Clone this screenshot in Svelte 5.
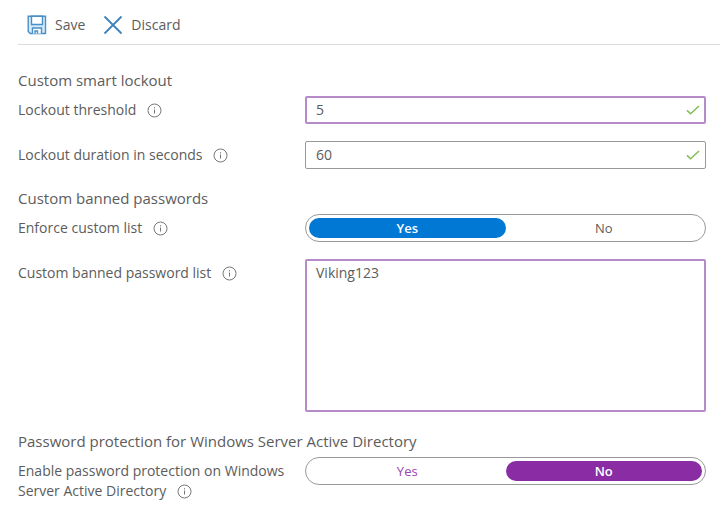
<script lang="ts">
	let threshold = '5';
	let duration = '60';
	let enforce = 'Yes';
	let banned = 'Viking123';
	let protection = 'No';

	const options = ['Yes', 'No'];
</script>

{#snippet info()}
	<svg class="info" viewBox="0 0 15 15" aria-hidden="true">
		<circle cx="7.5" cy="7.5" r="6.5" />
		<path d="M7.5 6.5v4M7.5 4.2v1.2" />
	</svg>
{/snippet}

{#snippet check()}
	<svg class="check" viewBox="0 0 14 10" aria-hidden="true">
		<path d="M1 5.4l3.6 3.4L13 1" />
	</svg>
{/snippet}

<nav class="toolbar">
	<button type="button">
		<svg class="command" viewBox="0 0 20 20" aria-hidden="true">
			<path class="fill" d="M1.2 1.2h17.3v17.3H3.2l-2-2z" />
			<path class="paper" d="M4.5 1.2h11v8.3h-11zM5.5 18.5v-5.5h9v5.5" />
			<path d="M8 18.5v-2.5h2.5v2.5" />
		</svg>
		Save
	</button>
	<button type="button">
		<svg class="command" viewBox="0 0 20 20" aria-hidden="true">
			<path class="cross" d="M1.5 1.5l17 17M18.5 1.5l-17 17" />
		</svg>
		Discard
	</button>
</nav>

<form>
	<section>
		<h2>Custom smart lockout</h2>
		<div class="row">
			<label for="threshold">Lockout threshold {@render info()}</label>
			<div class="field active">
				<input id="threshold" type="text" bind:value={threshold} />
				{@render check()}
			</div>
		</div>
		<div class="row">
			<label for="duration">Lockout duration in seconds {@render info()}</label>
			<div class="field">
				<input id="duration" type="text" bind:value={duration} />
				{@render check()}
			</div>
		</div>
	</section>

	<section>
		<h2>Custom banned passwords</h2>
		<div class="row">
			<span class="label" id="enforce">Enforce custom list {@render info()}</span>
			<div class="toggle" role="radiogroup" aria-labelledby="enforce">
				{#each options as option}
					<label>
						<input type="radio" name="enforce" value={option} bind:group={enforce} />
						<span>{option}</span>
					</label>
				{/each}
			</div>
		</div>
		<div class="row">
			<label for="banned">Custom banned password list {@render info()}</label>
			<textarea id="banned" spellcheck="false" bind:value={banned}></textarea>
		</div>
	</section>

	<section>
		<h2>Password protection for Windows Server Active Directory</h2>
		<div class="row">
			<span class="label" id="protection"
				>Enable password protection on Windows Server Active Directory {@render info()}</span
			>
			<div class="toggle changed" role="radiogroup" aria-labelledby="protection">
				{#each options as option}
					<label>
						<input type="radio" name="protection" value={option} bind:group={protection} />
						<span>{option}</span>
					</label>
				{/each}
			</div>
		</div>
	</section>
</form>

<style>
	:global(body) {
		margin: 0;
		background: #fff;
		color: #5c5c5c;
		font: 14px/20px 'Open Sans', 'Noto Sans', sans-serif;
	}

	.toolbar {
		display: flex;
		gap: 18px;
		margin-left: 18px;
		padding: 15px 9px 9px;
		border-bottom: 1px solid #dcdcdc;
	}

	.toolbar button {
		display: flex;
		align-items: center;
		gap: 8px;
		padding: 0;
		border: 0;
		background: none;
		color: inherit;
		font: inherit;
	}

	.command {
		width: 20px;
		height: 20px;
		fill: none;
		stroke: #4a90c8;
		stroke-width: 1.4;
	}

	.fill {
		fill: #d3eafa;
	}

	.paper {
		fill: #fff;
	}

	.cross {
		stroke: #3c82bd;
		stroke-width: 1.8;
	}

	form {
		display: flex;
		flex-direction: column;
		gap: 19px;
		padding: 25px 14px 12px 18px;
	}

	h2 {
		margin: 0 0 6px;
		font-size: 15px;
		font-weight: 400;
		line-height: 20px;
	}

	.row {
		display: grid;
		grid-template-columns: 277px minmax(0, 1fr);
		gap: 10px;
	}

	.row + .row {
		margin-top: 17px;
	}

	.row > label,
	.label {
		padding-top: 4px;
	}

	.info {
		width: 15px;
		height: 15px;
		margin-left: 7px;
		vertical-align: -3px;
		fill: none;
		stroke: #777;
		stroke-width: 1;
	}

	.field {
		display: flex;
		align-items: center;
		box-sizing: border-box;
		height: 28px;
		padding: 0 5px 0 10px;
		border: 1px solid #999;
		border-radius: 2px;
	}

	.field.active {
		padding: 0 4px 0 9px;
		border: 2px solid #b78aca;
	}

	.field input {
		flex: 1;
		min-width: 0;
		padding: 0;
		border: 0;
		outline: 0;
		background: none;
		color: inherit;
		font: inherit;
	}

	.check {
		width: 14px;
		height: 10px;
		fill: none;
		stroke: #83bd55;
		stroke-width: 1.5;
	}

	textarea {
		box-sizing: border-box;
		width: 100%;
		height: 153px;
		padding: 2px 9px;
		border: 2px solid #b78aca;
		border-radius: 2px;
		outline: 0;
		resize: none;
		display: block;
		color: inherit;
		font: inherit;
	}

	.toggle {
		display: flex;
		box-sizing: border-box;
		height: 28px;
		padding: 3px;
		border: 1px solid #999;
		border-radius: 14px;
		font-size: 13px;
	}

	.toggle label {
		flex: 1;
		position: relative;
	}

	.toggle input {
		position: absolute;
		inset: 0;
		margin: 0;
		opacity: 0;
	}

	.toggle span {
		display: block;
		border-radius: 10px;
		line-height: 20px;
		text-align: center;
	}

	.toggle input:checked + span {
		background: #0078d4;
		color: #fff;
		font-weight: 600;
	}

	.changed span {
		color: #9b45b2;
	}

	.changed input:checked + span {
		background: #8a2da5;
	}
</style>
